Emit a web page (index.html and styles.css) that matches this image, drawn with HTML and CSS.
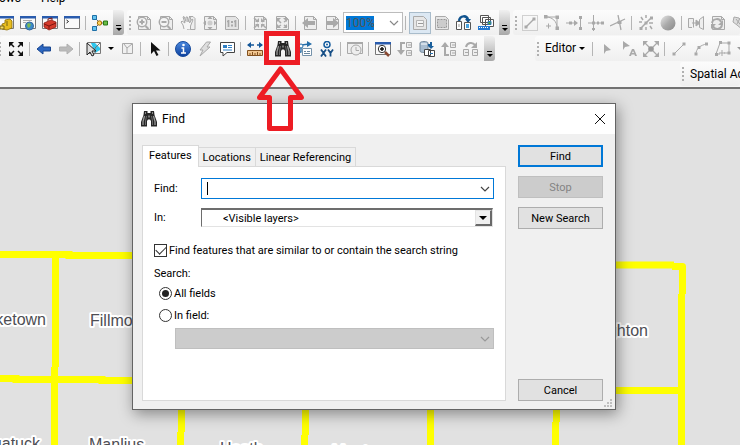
FILE: index.html
```html
<!DOCTYPE html>
<html lang="en">
<head>
<meta charset="utf-8">
<title>Find</title>
<link rel="stylesheet" href="styles.css">
</head>
<body>
<svg class="sprite" aria-hidden="true">
  <defs>
    <linearGradient id="ball" x1="0" y1="0" x2="1" y2="1"><stop offset="0" stop-color="#e8e8e8"/><stop offset=".5" stop-color="#aaa"/><stop offset="1" stop-color="#888"/></linearGradient>
    <linearGradient id="blue" x1="0" y1="0" x2="0" y2="1"><stop offset="0" stop-color="#4d8be0"/><stop offset="1" stop-color="#0b3f9c"/></linearGradient>
  </defs>
  <symbol id="i-frame" viewBox="0 0 16 16"><path d="M.5 1.500h15v12H.5z" fill="#fafafa" stroke="#777"/><path d="M0 1h16v2.500H0z" fill="#2a5cae"/></symbol>
  <symbol id="i-catalog" viewBox="0 0 16 16"><use href="#i-frame"/><path d="M7 5l5-1 2 2v7l-5 2-5-1V9l3-1z" fill="#e8bd1d" stroke="#8a6a00" stroke-width=".8"/><path d="M9 6v5M2 11h4v3H2z" stroke="#7a6410" fill="#f5dd66"/></symbol>
  <symbol id="i-search" viewBox="0 0 16 16"><use href="#i-frame"/><path d="M3 5.500h9M3 7.500h3" stroke="#aaa"/><circle cx="9.500" cy="11" r="4" fill="#3c8bc9" stroke="#35679c"/><path d="M8 8l3 1-1 3-2 1-1-3z" fill="#79b957"/></symbol>
  <symbol id="i-toolbox" viewBox="0 0 16 16"><use href="#i-frame"/><path d="M2 8l7-3 5 2v5l-7 3-5-3z" fill="#d53a2b" stroke="#8f1d14" stroke-width=".8"/><path d="M2 9l5 2 7-3M7 11v3M6 6V4l4-1v2" fill="none" stroke="#7c1710"/></symbol>
  <symbol id="i-python" viewBox="0 0 16 16"><use href="#i-frame"/><path d="M2.500 5l2 1.500-2 1.500" fill="none" stroke="#222"/></symbol>
  <symbol id="i-model" viewBox="0 0 16 16"><path d="M3 3l5 5-5 5M8 8h5" fill="none" stroke="#666"/><path d="M.5.500h4v4h-4zM.5 11.500h4v4h-4z" fill="#65c3ef" stroke="#1e70a8"/><circle cx="7.500" cy="8" r="2.200" fill="#ffd45a" stroke="#a36c00"/><path d="M11.500 6h4v4h-4z" fill="#69bd45" stroke="#2b7618"/></symbol>
  <symbol id="i-page" viewBox="0 0 16 16"><path d="M2.500 1.500h9l3 3v10h-12z" fill="#eee" stroke="currentColor"/><path d="M11.500 1.500v3h3" fill="none" stroke="currentColor"/></symbol>
  <symbol id="i-zin" viewBox="0 0 16 16"><use href="#i-page"/><circle cx="6" cy="7" r="4.700" fill="#f4f4f4" stroke="currentColor" stroke-width="1.500"/><path d="M6 4.500v5M3.500 7h5" stroke="currentColor" stroke-width="2"/><path d="M9.500 11l3 3" stroke="currentColor" stroke-width="2"/></symbol>
  <symbol id="i-zout" viewBox="0 0 16 16"><use href="#i-page"/><circle cx="6" cy="7" r="4.700" fill="#f4f4f4" stroke="currentColor" stroke-width="1.500"/><path d="M3.500 7h5M9.500 11l3 3" stroke="currentColor" stroke-width="2"/></symbol>
  <symbol id="i-hand" viewBox="0 0 16 16"><path d="M9 1.500h4l2 2v11H7" fill="#eee" stroke="currentColor"/><path d="M4 14l-1-4-2-3 1-1 3 2-2-6 1-.5 2 5V2h1.500l.5 5 1.500-5 1.200.5L9.500 8 12 4l1 .8L10.500 11v3.500" fill="#f5f5f5" stroke="currentColor"/></symbol>
  <symbol id="i-full" viewBox="0 0 16 16"><use href="#i-page"/><path d="M8 1l2.500 3h-5zM8 15l2.500-3h-5zM1 8l3-2.500v5zM15 8l-3-2.500v5z" fill="currentColor"/><circle cx="8" cy="8" r="2.500" fill="#ccc"/></symbol>
  <symbol id="i-one" viewBox="0 0 16 16"><path d="M1.500 1.500h10l3 3v10h-13z" fill="#e4e4e4" stroke="currentColor"/><path d="M4.500 5v7M3 6.500h1M11.500 5v7M10 6.500h1" stroke="currentColor" stroke-width="1.700"/><path d="M7 6h2v2H7zM7 9.500h2v2H7z" fill="currentColor"/></symbol>
  <symbol id="i-fin" viewBox="0 0 16 16"><use href="#i-page"/><path d="M2 3l4 4M14 3l-4 4M2 13l4-4M14 13l-4-4" stroke="currentColor" stroke-width="1.500"/><path d="M7 3v4H3zM9 3v4h4zM7 13V9H3zM9 13V9h4z" fill="currentColor"/></symbol>
  <symbol id="i-fout" viewBox="0 0 16 16"><use href="#i-page"/><path d="M4 5l3 3M13 5l-3 2M4 12l3-2M13 12l-3-2" stroke="currentColor" stroke-width="1.500"/><path d="M3 3h4L3 7zM13 3H9l4 4zM3 13h4L3 9zM13 13H9l4-4z" fill="currentColor"/></symbol>
  <symbol id="i-pleft" viewBox="0 0 16 16"><use href="#i-page"/><path d="M0 8l6-5v3h7v4H6v3z" fill="currentColor"/></symbol>
  <symbol id="i-pright" viewBox="0 0 16 16"><use href="#i-page"/><path d="M15 8L9 3v3H2v4h7v3z" fill="currentColor"/></symbol>
  <symbol id="i-draft" viewBox="0 0 16 16"><path d="M1.500 1.500h10l3 3v10h-13z" fill="#e6e6e6" stroke="#aaa"/><path d="M4.500 5.500h7v6h-7z" fill="#f4f4f4" stroke="#b5b5b5"/><path d="M6 8.500h5" stroke="#999"/></symbol>
  <symbol id="i-focus" viewBox="0 0 16 16"><path d="M1.500 1.500h10l3 3v10h-13z" fill="#e6e6e6" stroke="#aaa"/><path d="M3.500 4.500h9v8h-9z" fill="#ccc" stroke="#999" stroke-dasharray="2 1"/></symbol>
  <symbol id="i-layout" viewBox="0 0 16 16"><path d="M3 6C4 0 11 0 12 5" fill="none" stroke="#12548f" stroke-width="2.500"/><path d="M9 4h6l-3 4z" fill="#12548f"/><path d="M.5 6.500h5v8h-5zM8.500 7.500h6v7h-6z" fill="#fff" stroke="#555"/><path d="M2 9h2v3H2z" fill="#ccc"/><path d="M10 9h3v4h-3z" fill="#49a4e0"/></symbol>
  <symbol id="i-driven" viewBox="0 0 16 16"><path d="M2.500.500h8v7h-8zM4.500 2.500h8v7h-8zM7.500 4.500h8v7h-8z" fill="#fff" stroke="#555"/><path d="M10 6.500h3v3h-3z" fill="#50a33b" stroke="#2a77bb"/><path d="M0 11h12v4H0z" fill="#2378d1"/><path d="M1 12.500h10" stroke="#fff" stroke-dasharray="1 1"/></symbol>
  <symbol id="i-vbox" viewBox="0 0 16 16"><path d="M.5.500h15v15H.5z" fill="none" stroke="currentColor" stroke-dasharray="1 1"/><path d="M4 12l8-8" stroke="currentColor" stroke-width="1.500"/><path d="M2.500 10.500h3v3h-3zM10.500 2.500h3v3h-3z" fill="currentColor"/></symbol>
  <symbol id="i-curve" viewBox="0 0 16 16"><path d="M2 2h11v11M2 2c6 0 11 4 11 11" fill="none" stroke="currentColor"/><path d="M0 0h3.500v3.500H0zM11.500.500H15V4h-3.500zM11.500 11.500H15V15h-3.500z" fill="currentColor"/><path d="M4.500 8.500v5M2 11h5" stroke="currentColor"/></symbol>
  <symbol id="i-extend" viewBox="0 0 16 16"><path d="M0 8h11M14.500 2v12" stroke="currentColor"/><path d="M8 5l4 3-4 3zM3 6.500h3v3H3zM13 1h3v3h-3zM13 12h3v3h-3z" fill="currentColor"/></symbol>
  <symbol id="i-trim" viewBox="0 0 16 16"><path d="M0 8h10M5.500 0v16M10 8h6" stroke="currentColor"/><path d="M4 6.500h3v3H4zM9 6.500h2v3H9zM13 6.500h3v3h-3zM4 13h3v2H4z" fill="currentColor"/></symbol>
  <symbol id="i-split" viewBox="0 0 16 16"><path d="M0 11l15-7M8 0l3 15" stroke="currentColor" stroke-width="1.300"/><path d="M7.500 6h4v3h-4z" fill="currentColor"/></symbol>
  <symbol id="i-rays" viewBox="0 0 16 16"><path d="M3 13L13 3M3 2l2 3M8 0v3M1 7h3M12 11l2 3M8 12v3M11 8h4" stroke="currentColor" stroke-width="1.500"/><path d="M1.500 12h3v3h-3zM12 1.500h3v3h-3zM6.500 6.500h3v3h-3z" fill="currentColor"/></symbol>
  <symbol id="i-ball" viewBox="0 0 16 16"><circle cx="8" cy="8" r="7.500" fill="url(#ball)"/></symbol>
  <symbol id="i-merge" viewBox="0 0 16 16"><path d="M.5 3.500h5v9M.5 3.500v9H4M15.500 1.500v13l-4-2v-8z" fill="#eee" stroke="currentColor"/><path d="M4 8h5M8 5l4 3-4 3z" stroke="currentColor" fill="currentColor"/></symbol>
  <symbol id="i-sync" viewBox="0 0 16 16"><use href="#i-page"/><path d="M2 8c1-5 8-5 9-1M12 10c-1 5-8 5-9 1" fill="none" stroke="currentColor" stroke-width="2"/><path d="M13 5v5H8zM1 14V9h5z" fill="currentColor"/></symbol>
  <symbol id="i-wrench" viewBox="0 0 16 16"><path d="M2 2l5 1 6 9-2 3-6-5-4-3z" fill="#ddd" stroke="currentColor"/><path d="M4 4l7 9M8 3L5 9" stroke="currentColor"/></symbol>
  <symbol id="i-arrows" viewBox="0 0 16 16"><path d="M2 2l4 4M14 2l-4 4M2 14l4-4M14 14l-4-4" stroke="#111" stroke-width="1.500"/><path d="M1 1h5L1 6zM15 1h-5l5 5zM1 15h5l-5-5zM15 15h-5l5-5z" fill="#111"/></symbol>
  <symbol id="i-back" viewBox="0 0 16 16"><path d="M1 8l6-5v3h7.500v4H7v3z" fill="#2c66c0" stroke="#184690"/></symbol>
  <symbol id="i-fwd" viewBox="0 0 16 16"><path d="M15 8L9 3v3H1.500v4H9v3z" fill="#bbb" stroke="#b0b0b0"/></symbol>
  <symbol id="i-select" viewBox="0 0 16 16"><path d="M1.500 1.500h13v11h-13z" fill="#f5f5f5" stroke="#777"/><path d="M5 2h4l5 5v2l-5 3z" fill="#2ec7ee"/><path d="M9 7l5-5M9 7v5" stroke="#777"/><path d="M1 2v12l3-3 2 4 2-1-2-4h4z" fill="#ddd" stroke="#222"/></symbol>
  <symbol id="i-clear" viewBox="0 0 16 16"><path d="M3.500 2.500h10v10h-10z" fill="#f0f0f0" stroke="currentColor"/><path d="M5 3l3 4 5-4M8 7v5" fill="none" stroke="currentColor"/></symbol>
  <symbol id="i-pointer" viewBox="0 0 16 16"><path d="M4 1v12l3-3 2.500 5 2-1L9 9.500h4.500z" fill="#111"/></symbol>
  <symbol id="i-info" viewBox="0 0 16 16"><circle cx="8" cy="8" r="7.500" fill="url(#blue)" stroke="#174a9c"/><circle cx="8.500" cy="4" r="1.300" fill="#fff"/><path d="M6.500 7h2v5M6 12h5" fill="none" stroke="#fff" stroke-width="1.500"/></symbol>
  <symbol id="i-bolt" viewBox="0 0 16 16"><path d="M9.500 1h4L10 6h3L3 15l3-6H3z" fill="#ddd" stroke="currentColor"/></symbol>
  <symbol id="i-popup" viewBox="0 0 16 16"><path d="M1.500 1.500h14v10H8L4 15v-3.500H1.500z" fill="#fff" stroke="#444"/><path d="M4 4h4v3H4z" fill="#2f7fc4"/><path d="M9 4.500h4M9 6.500h4M4 9h9" stroke="#2f7fc4"/></symbol>
  <symbol id="i-measure" viewBox="0 0 16 16"><path d="M1 4h6M10 4h5" stroke="#145799" stroke-width="1.500"/><path d="M0 4l4-3v6zM16 4l-4-3v6z" fill="#145799"/><path d="M.5 9.500h15v5H.5z" fill="#f2c68f" stroke="#82501e"/><path d="M3 12v2M5.500 11v3M8 12v2M10.500 11v3M13 12v2" stroke="#82501e"/></symbol>
  <symbol id="i-bino" viewBox="0 0 16 16"><path d="M3 0h3.500v2h3V0H13l.5 4L16 11v4.500h-6V10L9 8.500H7L6 10v5.500H0V11l2.500-7z" fill="#262626"/><path d="M3.500 5L2 10.500V14M12.500 5l1.500 5.500V14" fill="none" stroke="#9a9a9a" stroke-width="1.300"/><path d="M5.500 5l-1 5v4M10.500 5l1 5v4" fill="none" stroke="#6a6a6a"/><path d="M4.500 1v2M11.500 1v2" stroke="#888"/><path d="M7 4.500h2v2H7z" fill="#777"/></symbol>
  <symbol id="i-route" viewBox="0 0 16 16"><path d="M0 12l4-1V4l8-1" fill="none" stroke="#236ca8" stroke-width="1.300"/><path d="M10 0l5 3-5 3z" fill="#236ca8"/><circle cx="4" cy="5" r="2" fill="#fff" stroke="#236ca8"/><path d="M5.500 7.500h9v7h-9z" fill="#fff" stroke="#7592aa"/><path d="M7 10.500h2M10 10.500h3M7 12.500h6" stroke="#67859d"/></symbol>
  <symbol id="i-xy" viewBox="0 0 16 16"><circle cx="8" cy="3.500" r="3" fill="#fff" stroke="#145c9e" stroke-width="1.500"/><circle cx="8" cy="3.500" r="1" fill="#145c9e"/><path d="M2 8.500l5 7M7 8.500l-5 7M9 8.500l2.500 3.500L14 8.500M11.500 12v3.500" fill="none" stroke="#174f86" stroke-width="1.800"/></symbol>
  <symbol id="i-clock" viewBox="0 0 16 16"><path d="M.5 1.500h15v11H.5z" fill="#eee" stroke="currentColor"/><path d="M0 2h16" stroke="currentColor" stroke-width="2"/><circle cx="9" cy="9" r="5" fill="#eee" stroke="currentColor"/><path d="M9 6v3.500h3" fill="none" stroke="currentColor"/></symbol>
  <symbol id="i-viewer" viewBox="0 0 16 16"><use href="#i-frame"/><circle cx="7" cy="8" r="3.700" fill="#fff" stroke="#333"/><path d="M7 6v4M5 8h4" stroke="#111" stroke-width="1.500"/><path d="M10 11l4 4" stroke="#8a4a33" stroke-width="2.500"/></symbol>
  <symbol id="i-down" viewBox="0 0 16 16"><path d="M8 2H4v8" fill="none" stroke="currentColor" stroke-width="2"/><path d="M0 9h8l-4 5z" fill="currentColor"/><path d="M9.500 1.500h5v5h-5zM9.500 9.500h5v5h-5z" fill="#eee" stroke="currentColor"/><path d="M11 4h3M11 12h3" stroke="currentColor"/></symbol>
  <symbol id="i-up" viewBox="0 0 16 16"><path d="M8 14H4V5" fill="none" stroke="currentColor" stroke-width="2"/><path d="M0 6h8L4 1z" fill="currentColor"/><path d="M9.500 1.500h5v5h-5zM9.500 9.500h5v5h-5z" fill="#eee" stroke="currentColor"/><path d="M11 4h3M11 12h3" stroke="currentColor"/></symbol>
  <symbol id="i-data" viewBox="0 0 16 16"><path d="M1 2c0-2 8-2 8 0v8c0 2-8 2-8 0z" fill="#a9bdd0" stroke="#75899b"/><path d="M2 3h6" stroke="#fff"/><path d="M9 4h3V1v5" fill="none" stroke="#195e9b" stroke-width="2"/><path d="M9 5h6l-3 3z" fill="#195e9b"/><path d="M5.500 8.500h6v6h-6zM9.500 9.500h6v6h-6z" fill="#fff" stroke="#444"/><path d="M11 12.500h3" stroke="#2d75b5"/></symbol>
  <symbol id="i-swap" viewBox="0 0 16 16"><path d="M3 6c1-5 7-5 9-2" fill="none" stroke="currentColor" stroke-width="2"/><path d="M14 1v6H8z" fill="currentColor"/><path d="M.5 8.500h5v6h-5zM9.500 8.500h5v6h-5z" fill="#eee" stroke="currentColor"/><path d="M2 11.500h3M11 11.500h3" stroke="currentColor"/></symbol>
  <symbol id="i-edit" viewBox="0 0 16 16"><path d="M5 3v10l2-3 5-1z" fill="currentColor"/></symbol>
  <symbol id="i-edita" viewBox="0 0 16 16"><path d="M2 0v9l2-3 5-1zM8 15l3-7h2l3 7h-2l-.5-1.500h-3L10 15zM11 12h2l-1-2z" fill="currentColor" fill-rule="evenodd"/></symbol>
  <symbol id="i-verts" viewBox="0 0 16 16"><path d="M2 2l12 12M14 2L2 14" stroke="currentColor" stroke-width="1.200"/><circle cx="8" cy="8" r="2.800" fill="#999"/><path d="M0 0h5L0 5zM16 0h-5l5 5zM0 16h5l-5-5zM16 16h-5l5-5z" fill="currentColor"/></symbol>
  <symbol id="i-line" viewBox="0 0 16 16"><path d="M3 13L13 3" stroke="currentColor"/><path d="M1.500 11.500h3v3h-3zM11.500 1.500h3v3h-3z" fill="currentColor"/></symbol>
  <symbol id="i-arc" viewBox="0 0 16 16"><path d="M3 13c0-5 4-9 11-10" fill="none" stroke="currentColor"/><path d="M1.500 11.500h3v3h-3zM4.500 5h3v3h-3zM12 1.500h3v3h-3z" fill="currentColor"/></symbol>
  <symbol id="i-poly" viewBox="0 0 16 16"><path d="M1 13L5 2h9v10H9M1 13h4" fill="none" stroke="currentColor"/><path d="M0 12h3v3H0zM4 0h3v3H4zM12.500.500h3v3h-3zM12.500 10.500h3v3h-3z" fill="currentColor"/><path d="M7 9v6M4 12h6" stroke="currentColor"/></symbol>
  <symbol id="i-chev" viewBox="0 0 16 16"><path d="M4 6l4 4 4-4" fill="none" stroke="currentColor" stroke-width="1.200"/></symbol>
</svg>

<header class="chrome">
  <nav class="menubar"><a href="#">Windows</a><a href="#">Help</a></nav>

  <div class="row">
    <div class="bar bar-cut">
      <button class="tool"><svg><use href="#i-catalog"/></svg></button>
      <button class="tool"><svg><use href="#i-search"/></svg></button>
      <button class="tool"><svg><use href="#i-toolbox"/></svg></button>
      <button class="tool"><svg><use href="#i-python"/></svg></button>
      <i class="sep"></i>
      <button class="tool"><svg><use href="#i-model"/></svg></button>
      <button class="more"></button>
    </div>
    <div class="bar">
      <i class="grip"></i>
      <button class="tool" disabled><svg><use href="#i-zin"/></svg></button>
      <button class="tool" disabled><svg><use href="#i-zout"/></svg></button>
      <button class="tool" disabled><svg><use href="#i-hand"/></svg></button>
      <button class="tool" disabled><svg><use href="#i-full"/></svg></button>
      <button class="tool" disabled><svg><use href="#i-one"/></svg></button>
      <i class="sep"></i>
      <button class="tool" disabled><svg><use href="#i-fin"/></svg></button>
      <button class="tool" disabled><svg><use href="#i-fout"/></svg></button>
      <i class="sep"></i>
      <button class="tool" disabled><svg><use href="#i-pleft"/></svg></button>
      <button class="tool" disabled><svg><use href="#i-pright"/></svg></button>
      <label class="zoom"><input value="100%" disabled aria-label="Zoom"><svg><use href="#i-chev"/></svg></label>
      <i class="sep"></i>
      <button class="tool tool-on" disabled><svg><use href="#i-draft"/></svg></button>
      <button class="tool" disabled><svg><use href="#i-focus"/></svg></button>
      <button class="tool"><svg><use href="#i-layout"/></svg></button>
      <button class="tool"><svg><use href="#i-driven"/></svg></button>
      <button class="more"></button>
    </div>
    <div class="bar bar-fill">
      <i class="grip"></i>
      <button class="tool" disabled><svg><use href="#i-vbox"/></svg></button>
      <button class="tool" disabled><svg><use href="#i-curve"/></svg></button>
      <button class="tool" disabled><svg><use href="#i-extend"/></svg></button>
      <button class="tool" disabled><svg><use href="#i-trim"/></svg></button>
      <button class="tool" disabled><svg><use href="#i-split"/></svg></button>
      <i class="sep"></i>
      <button class="tool" disabled><svg><use href="#i-rays"/></svg></button>
      <button class="tool" disabled><svg><use href="#i-ball"/></svg></button>
      <i class="sep"></i>
      <button class="tool" disabled><svg><use href="#i-merge"/></svg></button>
      <button class="tool" disabled><svg><use href="#i-sync"/></svg></button>
      <button class="tool" disabled><svg><use href="#i-wrench"/></svg></button>
    </div>
  </div>

  <div class="row">
    <div class="bar">
      <i class="grip grip-edge"></i>
      <button class="tool"><svg><use href="#i-arrows"/></svg></button>
      <i class="sep"></i>
      <button class="tool"><svg><use href="#i-back"/></svg></button>
      <button class="tool"><svg><use href="#i-fwd"/></svg></button>
      <i class="sep"></i>
      <button class="tool"><svg><use href="#i-select"/></svg></button>
      <button class="drop"></button>
      <button class="tool" disabled><svg><use href="#i-clear"/></svg></button>
      <i class="sep"></i>
      <button class="tool"><svg><use href="#i-pointer"/></svg></button>
      <i class="sep"></i>
      <button class="tool"><svg><use href="#i-info"/></svg></button>
      <button class="tool" disabled><svg><use href="#i-bolt"/></svg></button>
      <button class="tool"><svg><use href="#i-popup"/></svg></button>
      <i class="sep"></i>
      <button class="tool"><svg><use href="#i-measure"/></svg></button>
      <i class="sep"></i>
      <button class="tool"><svg><use href="#i-bino"/></svg></button>
      <button class="tool"><svg><use href="#i-route"/></svg></button>
      <button class="tool"><svg><use href="#i-xy"/></svg></button>
      <i class="sep"></i>
      <button class="tool" disabled><svg><use href="#i-clock"/></svg></button>
      <i class="sep"></i>
      <button class="tool"><svg><use href="#i-viewer"/></svg></button>
      <button class="tool" disabled><svg><use href="#i-down"/></svg></button>
      <button class="tool"><svg><use href="#i-data"/></svg></button>
      <button class="tool" disabled><svg><use href="#i-up"/></svg></button>
      <button class="tool" disabled><svg><use href="#i-swap"/></svg></button>
      <button class="more"></button>
    </div>
    <div class="bar bar-editor">
      <i class="grip"></i>
      <button class="text">Editor</button>
      <i class="sep"></i>
      <button class="tool" disabled><svg><use href="#i-edit"/></svg></button>
      <button class="tool" disabled><svg><use href="#i-edita"/></svg></button>
      <button class="tool" disabled><svg><use href="#i-verts"/></svg></button>
      <i class="sep"></i>
      <button class="tool" disabled><svg><use href="#i-line"/></svg></button>
      <button class="tool" disabled><svg><use href="#i-arc"/></svg></button>
      <button class="tool" disabled><svg><use href="#i-poly"/></svg></button>
      <button class="drop" disabled></button>
    </div>
  </div>

  <div class="row">
    <div class="bar bar-spatial"><i class="grip"></i><span class="label">Spatial Adjustment</span></div>
  </div>
</header>

<main class="map">
  <svg class="map-art" viewBox="0 89 740 356" preserveAspectRatio="xMinYMin slice">
    <g class="roads">
      <path d="M0 254.500H69V255.500H132L616 265H674"/>
      <path d="M0 378.500H16V379.500H102V380.500H132L616 390.500H684"/>
      <path d="M55.500 252V367M54.500 367V445"/>
      <path d="M181.500 400V432M180.500 432V445M305.500 400V435M304.500 435V445M430.500 400V445M556.500 400V422M555.500 422V445"/>
      <path d="M672 266.500H682.500V294M681.500 294V445" stroke-linejoin="round"/>
    </g>
    <g class="places">
      <text x="46" y="325" text-anchor="end">Laketown</text>
      <text x="90" y="326">Fillmore</text>
      <text x="648" y="336" text-anchor="end">Leighton</text>
      <text x="40" y="449" text-anchor="end">Saugatuck</text>
      <text x="89" y="450">Manlius</text>
      <text x="220" y="454">Heath</text>
      <text x="332" y="457">Monterey</text>
    </g>
  </svg>
</main>

<section class="dialog" role="dialog" aria-labelledby="dlg-title">
  <div class="titlebar">
    <svg class="app-icon"><use href="#i-bino"/></svg>
    <h1 id="dlg-title">Find</h1>
    <button class="close" aria-label="Close"><svg viewBox="0 0 12 12"><path d="M1 1l10 10M11 1L1 11"/></svg></button>
  </div>
  <form class="content">
    <div class="tabs-area">
      <div class="tabs" role="tablist">
        <button type="button" role="tab" class="tab tab-on" aria-selected="true">Features</button>
        <button type="button" role="tab" class="tab">Locations</button>
        <button type="button" role="tab" class="tab">Linear Referencing</button>
      </div>
      <div class="panel">
        <div class="field">
          <label for="find">Find:</label>
          <div class="combo"><i class="caret"></i><input id="find" type="text"><svg><use href="#i-chev"/></svg></div>
        </div>
        <div class="field">
          <label for="layers">In:</label>
          <div class="classic"><select id="layers"><option>&lt;Visible layers&gt;</option></select><i class="arrow"></i></div>
        </div>
        <label class="check"><input type="checkbox" checked>Find features that are similar to or contain the search string</label>
        <p class="group">Search:</p>
        <label class="radio"><input type="radio" name="scope" checked>All fields</label>
        <label class="radio"><input type="radio" name="scope">In field:</label>
        <div class="combo combo-off"><select disabled aria-label="Field"></select><svg><use href="#i-chev"/></svg></div>
      </div>
    </div>
    <div class="actions">
      <button type="button" class="btn btn-default">Find</button>
      <button type="button" class="btn" disabled>Stop</button>
      <button type="button" class="btn">New Search</button>
      <button type="button" class="btn btn-last">Cancel</button>
    </div>
  </form>
  <svg class="size-grip" viewBox="0 0 8 8"><path d="M6 0h2v2H6zM3 3h2v2H3zM6 3h2v2H6zM0 6h2v2H0zM3 6h2v2H3zM6 6h2v2H6z"/></svg>
</section>

<svg class="callout" viewBox="0 0 50 104" aria-hidden="true">
  <path d="M10.500 3.500H41.500V32.500H10.500z"/>
  <path d="M24.500 39L45.500 67.500H34.500V98.500H13.500V67.500H3.500z" stroke-linejoin="round"/>
</svg>
</body>
</html>
```
FILE: styles.css
```css
* { box-sizing: border-box; }

html, body { height: 100%; }

body {
  margin: 0;
  display: flex;
  flex-direction: column;
  position: relative;
  overflow: hidden;
  background: #e1e1e1;
  color: #000;
  font: 11px/13px Roboto, "Liberation Sans", sans-serif;
}

button, input, select { font: inherit; color: inherit; margin: 0; padding: 0; border-radius: 0; }
svg { display: block; }
.sprite { position: absolute; width: 0; height: 0; }

/* Toolbars */
.chrome {
  flex: none;
  overflow: hidden;
  background: #f6f6f6;
  border-bottom: 2px solid #727272;
  font-size: 12px;
}

.menubar {
  display: flex;
  align-items: flex-end;
  gap: 20px;
  height: 10px;
  margin-left: -28px;
  padding-bottom: 5px;
}
.menubar a { color: #000; text-decoration: none; }

.row { display: flex; height: 26px; padding-bottom: 1px; }
.row:last-child { height: 25px; }

.bar {
  display: flex;
  align-items: center;
  flex: none;
  border-radius: 3px;
  background: linear-gradient(#fcfcfc, #efefef);
}
.bar + .bar { margin-left: 3px; }
.bar-cut { margin-left: -5px; }
.bar-fill { flex: 1 0 0; overflow: hidden; }
.row .bar-editor { flex: 1 0 0; margin-left: 40px; }
.bar-spatial { width: 60px; margin-left: auto; overflow: hidden; }

.tool, .drop, .more, .text {
  border: 0;
  background: none;
  flex: none;
}
.tool {
  width: 22px;
  height: 22px;
  display: grid;
  place-items: center;
}
.tool svg { width: 16px; height: 16px; }
.tool:disabled { color: #a9a9a9; }
.tool-on { background: #dce8f3; border: 1px solid #a9bccb; }

.sep { width: 1px; height: 14px; flex: none; margin: 0 3px 0 2px; background: #b5b5b5; }

.grip {
  width: 2px;
  height: 14px;
  flex: none;
  margin: 0 2px;
  background: repeating-linear-gradient(#b0b0b0 0 2px, transparent 2px 4px);
}
.grip-edge { margin: 0 4px 0 -1px; }

.drop { width: 11px; height: 22px; display: grid; place-items: center; }
.drop::before, .text::after {
  content: "";
  border: 3px solid transparent;
  border-top: 3px solid #000;
  border-bottom: 0;
}
.drop:disabled::before { border-top-color: #999; }

.more {
  width: 11px;
  align-self: stretch;
  margin-left: 2px;
  display: flex;
  flex-direction: column;
  align-items: center;
  justify-content: flex-end;
  gap: 2px;
  padding-bottom: 4px;
  border-radius: 0 3px 3px 0;
  background: linear-gradient(#f0f0f0, #a8a8a8);
}
.more::before { content: ""; width: 5px; height: 1px; background: #000; }
.more::after {
  content: "";
  border: 3px solid transparent;
  border-top: 3px solid #000;
  border-bottom: 0;
}

.text { display: flex; align-items: center; gap: 3px; padding: 0 5px 0 4px; }
.label { padding-left: 4px; white-space: nowrap; }

.zoom {
  display: flex;
  align-items: center;
  width: 60px;
  height: 21px;
  border: 1px solid #bcbcbc;
  background: #fff;
  color: #888;
}
.zoom input {
  width: 28px;
  height: 14px;
  margin-left: 2px;
  border: 0;
  background: #0078d7;
  color: #555;
}
.zoom svg { width: 16px; height: 16px; margin-left: auto; }

/* Map */
.map { flex: 1 1 0; min-height: 0; background: #e1e1e1; }
.map-art { width: 100%; height: 100%; }
.roads { fill: none; stroke: #ff0; stroke-width: 7px; }
.places {
  font: 16px "Liberation Sans", Arial, sans-serif;
  fill: #4e4e54;
  stroke: #fff;
  stroke-width: 4px;
  stroke-linejoin: round;
  paint-order: stroke;
}

/* Find window */
.dialog {
  position: absolute;
  left: 132px;
  top: 103px;
  width: 484px;
  border: 1px solid #646464;
  background: #f0f0f0;
  box-shadow: 2px 4px 14px rgba(0, 0, 0, .4);
}

.titlebar {
  display: flex;
  align-items: center;
  gap: 5px;
  height: 30px;
  padding: 0 9px 0 8px;
  background: #fff;
}
.titlebar h1 { margin: 0; font-size: 12px; font-weight: 400; }
.app-icon { width: 16px; height: 16px; }
.close { margin-left: auto; border: 0; background: none; }
.close svg { width: 12px; height: 12px; fill: none; stroke: #111; }

.content { display: flex; gap: 12px; padding: 11px 12px 8px 9px; }
.tabs-area { flex: 1; display: flex; flex-direction: column; }

.tabs { display: flex; align-items: flex-end; }
.tab {
  height: 19px;
  padding: 0 4px;
  border: 1px solid #d9d9d9;
  border-width: 1px 1px 0 0;
  background: #f0f0f0;
}
.tab-on {
  height: 22px;
  margin-bottom: -1px;
  padding: 0 6px 2px;
  border-left-width: 1px;
  background: #fff;
  position: relative;
}

.panel {
  display: flex;
  flex-direction: column;
  align-items: stretch;
  height: 235px;
  padding: 11px;
  border: 1px solid #d9d9d9;
  background: #fff;
}

.field { display: grid; grid-template-columns: 47px 1fr; align-items: center; margin-bottom: 9px; }

.combo {
  display: flex;
  align-items: center;
  height: 21px;
  border: 1px solid #0078d7;
  background: #fff;
  color: #444;
}
.combo input, .combo select {
  flex: 1;
  min-width: 0;
  height: 100%;
  border: 0;
  outline: 0;
  background: none;
  appearance: none;
}
.combo svg { width: 16px; height: 16px; }
.caret { width: 1px; height: 13px; margin-left: 5px; background: #000; }
.combo-off { margin: 6px 0 0 21px; border-color: #bfbfbf; background: #ccc; color: #999; }

.classic {
  display: flex;
  height: 19px;
  margin-right: 1px;
  border: 1px solid #e3e3e3;
  border-top: 2px solid #6d6d6d;
  border-left: 1px solid #6d6d6d;
  background: #fff;
}
.classic select {
  flex: 1;
  border: 0;
  background: none;
  appearance: none;
  padding-left: 21px;
}
.arrow {
  width: 17px;
  display: grid;
  place-items: center;
  border: 1px solid #e3e3e3;
  border-right: 2px solid #696969;
  border-bottom: 2px solid #696969;
  background: #f0f0f0;
}
.arrow::before {
  content: "";
  border: 4px solid transparent;
  border-top: 4px solid #000;
  border-bottom: 0;
}

.check, .radio { display: flex; align-items: center; gap: 2px; }
.check { margin-top: 8px; }
.check input, .radio input {
  appearance: none;
  width: 13px;
  height: 13px;
  flex: none;
  border: 1px solid #333;
  background: #fff;
  display: grid;
  place-items: center;
}
.check input:checked::before {
  content: "";
  width: 9px;
  height: 5px;
  margin-bottom: 3px;
  border: solid #333;
  border-width: 0 0 1px 1px;
  transform: rotate(-45deg);
}
.radio { margin: 0 0 9px 5px; }
.radio + .radio { margin-bottom: 0; }
.radio input { border-radius: 50%; }
.radio input:checked::before { content: ""; width: 7px; height: 7px; border-radius: 50%; background: #222; }
.group { margin: 10px 0 7px; }

.actions { display: flex; flex-direction: column; gap: 9px; width: 85px; }
.btn { height: 22px; border: 1px solid #adadad; background: #e1e1e1; }
.btn-default { border: 2px solid #0078d7; }
.btn:disabled { border-color: #bfbfbf; background: #ccc; color: #838383; }
.btn-last { margin-top: auto; }

.size-grip { position: absolute; right: 3px; bottom: 2px; width: 8px; height: 8px; fill: #bfbfbf; }

/* Pointer to the Find tool */
.callout {
  position: absolute;
  left: 256px;
  top: 30px;
  width: 50px;
  height: 104px;
  fill: none;
  stroke: #ed1c24;
  stroke-width: 5px;
  pointer-events: none;
}
```
